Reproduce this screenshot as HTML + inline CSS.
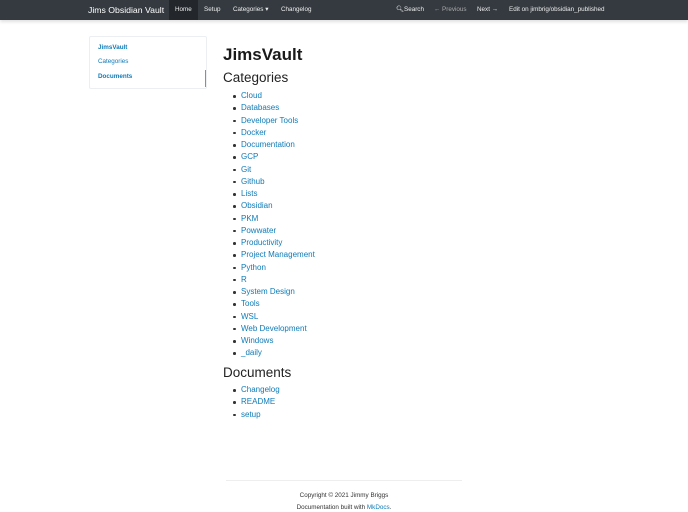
<!DOCTYPE html>
<html><head><style>
*{margin:0;padding:0;box-sizing:border-box}
body{width:688px;height:512px;overflow:hidden;background:#fff;font-family:"Liberation Sans",sans-serif;color:#343a40;position:relative}
.nav{position:absolute;left:0;top:0;width:688px;height:20px;background:#343a40;box-shadow:0 2px 3px rgba(0,0,0,.12)}
.nav span{position:absolute;top:0;line-height:20px;font-size:6.3px;color:#eee}
.brand{font-size:8.7px!important;color:#fff!important}
.active{background:#23272b;padding:0 6px}
.side{position:absolute;left:89px;top:36px;width:118px;height:53px;border:1px solid #eceff1;border-radius:2px}
.side div{position:absolute;left:8px;font-size:6.3px;color:#0e7bb8}
.side div.bar{left:auto;right:0;top:33px;width:1px;height:17px;background:#4aa3d0}
h1{position:absolute;left:223px;top:45px;font-size:17px;font-weight:bold;color:#1a1a1a}
h2{position:absolute;left:223px;font-size:13.5px;font-weight:normal;color:#222}
ul{position:absolute;left:233px;list-style:none;font-size:8px}
li{height:12.25px;line-height:12.25px;color:#0e7bb8;position:relative;padding-left:8px}
li:before{content:"";position:absolute;left:0;top:5px;width:2.5px;height:2.5px;border-radius:50%;background:#333}
.hr{position:absolute;left:226px;top:480px;width:236px;height:1px;background:#eee}
.f{position:absolute;left:0;width:688px;text-align:center;font-size:6.3px;color:#333}
</style></head><body>
<div class="nav">
<span class="brand" style="left:88px">Jims Obsidian Vault</span>
<span class="active" style="left:169px">Home</span>
<span style="left:204px">Setup</span>
<span style="left:233px">Categories ▾</span>
<span style="left:281px">Changelog</span>
<span style="left:396px">&#x1F50D;&#xFE0E;Search</span>
<span style="left:434px;color:#aaa">← Previous</span>
<span style="left:477px">Next →</span>
<span style="left:509px">Edit on jimbrig/obsidian_published</span>
</div>
<div class="side">
<div style="top:7px;font-weight:bold">JimsVault</div>
<div style="top:21px">Categories</div>
<div style="top:36px;font-weight:bold">Documents</div>
<div class="bar"></div>
</div>
<h1>JimsVault</h1>
<h2 style="top:70px">Categories</h2>
<ul style="top:90px">
<li>Cloud</li><li>Databases</li><li>Developer Tools</li><li>Docker</li><li>Documentation</li><li>GCP</li><li>Git</li><li>Github</li><li>Lists</li><li>Obsidian</li><li>PKM</li><li>Powwater</li><li>Productivity</li><li>Project Management</li><li>Python</li><li>R</li><li>System Design</li><li>Tools</li><li>WSL</li><li>Web Development</li><li>Windows</li><li>_daily</li>
</ul>
<h2 style="top:365px">Documents</h2>
<ul style="top:384px"><li>Changelog</li><li>README</li><li>setup</li></ul>
<div class="hr"></div>
<div class="f" style="top:492px">Copyright © 2021 Jimmy Briggs</div>
<div class="f" style="top:504px">Documentation built with <span style="color:#0e7bb8">MkDocs</span>.</div>
</body></html>
